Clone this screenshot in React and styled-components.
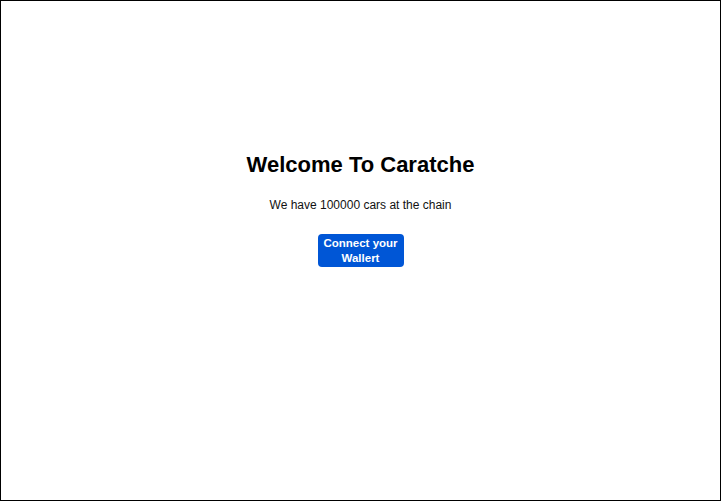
import React from 'react';
import styled, { createGlobalStyle } from 'styled-components';

const GlobalStyle = createGlobalStyle`
  html, body {
    margin: 0;
    padding: 0;
    background: #ffffff;
  }
  body {
    font-family: 'Liberation Sans', Arial, sans-serif;
  }
`;

const Frame = styled.div`
  box-sizing: border-box;
  width: 721px;
  height: 501px;
  border: 1px solid #000;
  display: flex;
  flex-direction: column;
  align-items: center;
  padding-top: 149px;
`;

const Title = styled.h1`
  margin: 0;
  font-size: 22px;
  font-weight: 700;
  line-height: 30px;
  color: #000;
`;

const Subtitle = styled.p`
  margin: 17px 0 0;
  font-size: 12px;
  line-height: 16px;
  color: #111;
`;

const ConnectButton = styled.button`
  margin-top: 21px;
  width: 86px;
  height: 33px;
  padding: 0 4px;
  border: none;
  border-radius: 4px;
  background: #0056d6;
  color: #fff;
  font-family: 'Liberation Sans', Arial, sans-serif;
  font-size: 11.5px;
  font-weight: 700;
  line-height: 15px;
  cursor: pointer;
`;

export default function App() {
  return (
    <>
      <GlobalStyle />
      <Frame>
        <Title>Welcome To Caratche</Title>
        <Subtitle>We have 100000 cars at the chain</Subtitle>
        <ConnectButton>Connect your Wallert</ConnectButton>
      </Frame>
    </>
  );
}
